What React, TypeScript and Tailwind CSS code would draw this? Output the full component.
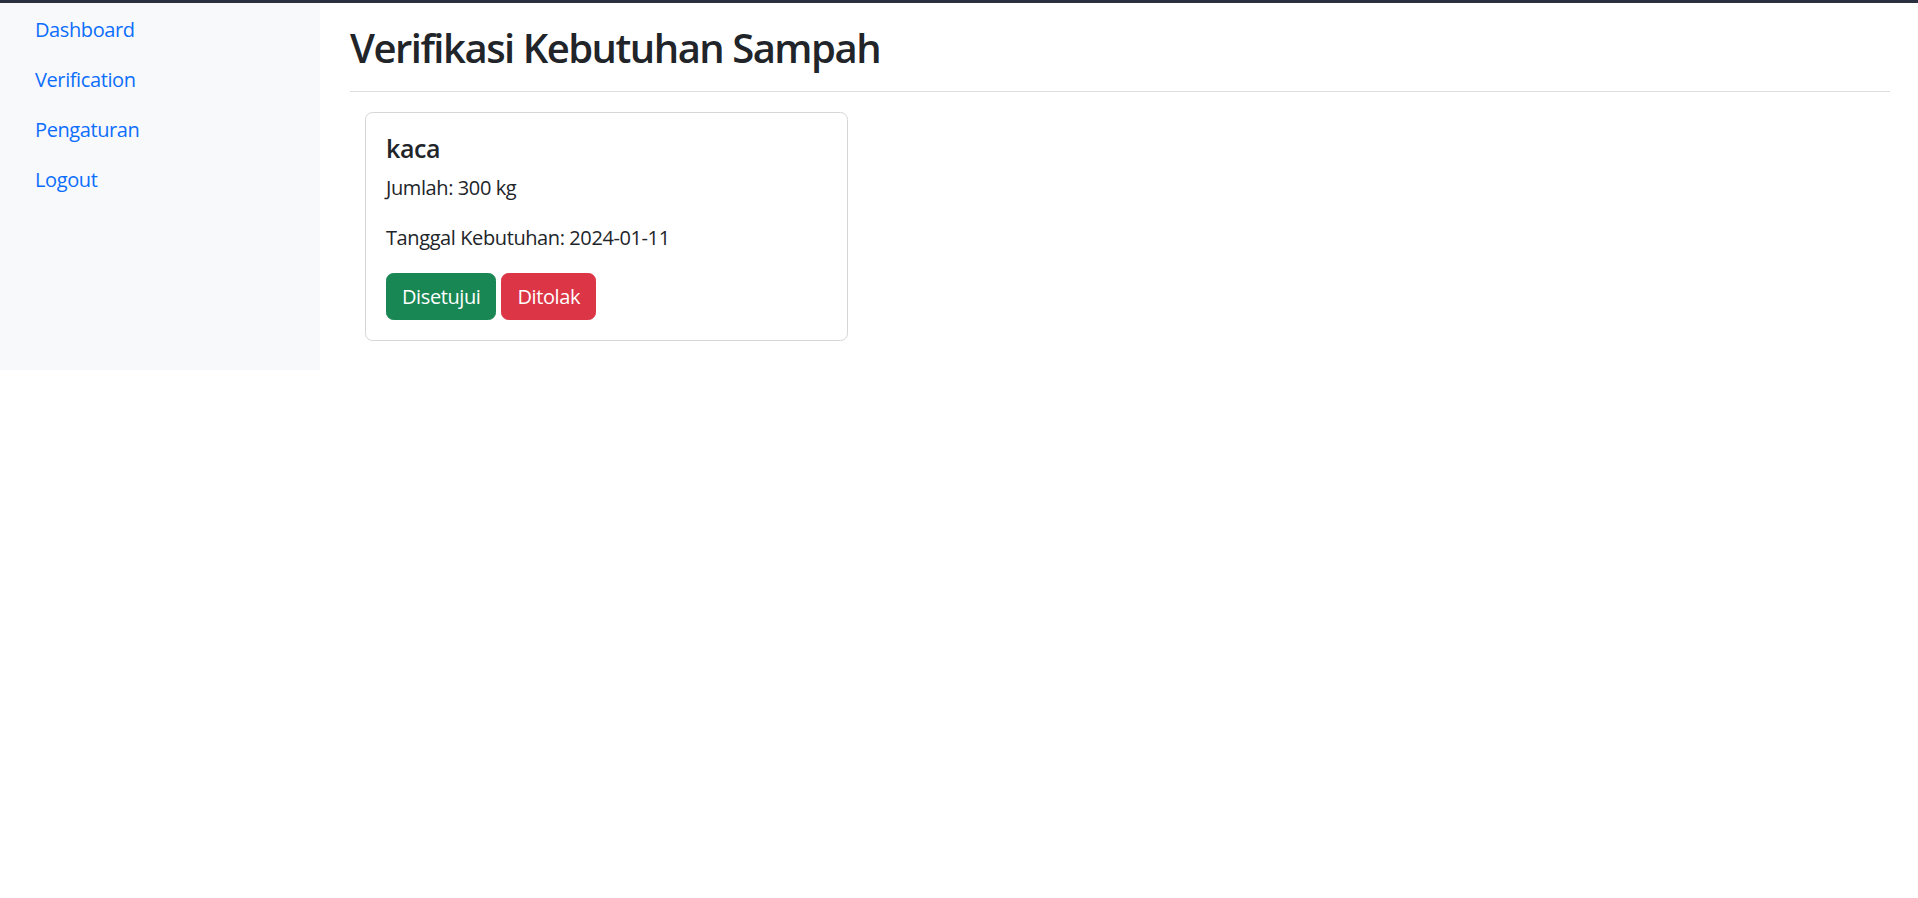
import React from 'react';

const navLinks = ['Dashboard', 'Verification', 'Pengaturan', 'Logout'];

const App: React.FC = () => {
  return (
    <div className="min-h-screen bg-white text-[#212529] tracking-[-0.4px] font-['Segoe_UI','Open_Sans',sans-serif]">
      {/* top strip */}
      <div className="h-[3px] bg-[#2b3040]" />

      <div className="flex items-start">
        {/* Sidebar */}
        <aside className="w-[320px] h-[367px] bg-[#f8f9fa] shrink-0">
          <nav className="flex flex-col pt-[2px]">
            {navLinks.map(link => (
              <a
                key={link}
                href="#"
                className="px-[35px] py-[10px] text-[20px] leading-[30px] text-[#0d6efd]"
              >
                {link}
              </a>
            ))}
          </nav>
        </aside>

        {/* Main */}
        <main className="flex-1 pl-[30px] pr-[28px]">
          <h1 className="mt-[21px] mb-[19px] text-[40px] leading-[48px] font-semibold tracking-[-1.5px]">
            Verifikasi Kebutuhan Sampah
          </h1>
          <hr className="border-0 border-t border-[#dedede]" />

          <div className="pl-[15px] pt-[20px]">
            <div className="w-[483px] border border-[#d6d6d6] rounded-[7.5px] p-[20px] bg-white">
              <h5 className="text-[25px] leading-[30px] font-semibold mb-[10px]">kaca</h5>
              <p className="text-[20px] leading-[30px] mb-[20px]">Jumlah: 300 kg</p>
              <p className="text-[20px] leading-[30px] mb-[20px]">Tanggal Kebutuhan: 2024-01-11</p>
              <div className="flex gap-[5px]">
                <button className="px-[15px] py-[7.5px] border border-[#198754] bg-[#198754] text-white text-[20px] leading-[30px] rounded-[7.5px]">
                  Disetujui
                </button>
                <button className="px-[15px] py-[7.5px] border border-[#dc3545] bg-[#dc3545] text-white text-[20px] leading-[30px] rounded-[7.5px]">
                  Ditolak
                </button>
              </div>
            </div>
          </div>
        </main>
      </div>
    </div>
  );
};

export default App;
